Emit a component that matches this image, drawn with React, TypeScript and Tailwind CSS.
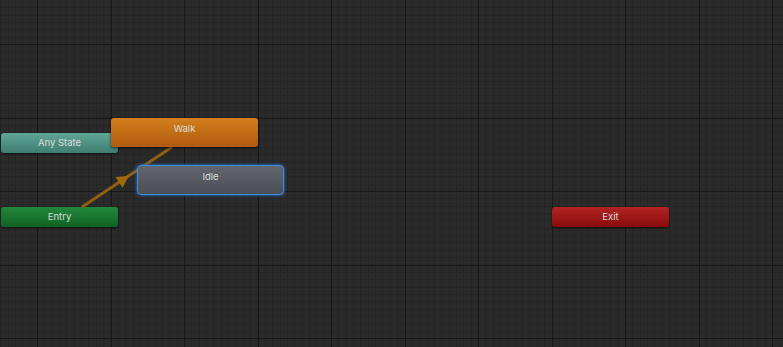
import React from "react";

const W = 783;
const H = 347;
const STEP = 73.5;
const MINOR = STEP / 10;
const OX = 37;
const OY = 44;

function Grid() {
  const minorV: number[] = [];
  const minorH: number[] = [];
  const majorV: number[] = [];
  const majorH: number[] = [];
  for (let x = OX - STEP * 2; x < W; x += MINOR) if (x >= 0) minorV.push(Math.round(x));
  for (let y = OY - STEP * 2; y < H; y += MINOR) if (y >= 0) minorH.push(Math.round(y));
  for (let x = OX; x < W; x += STEP) majorV.push(Math.round(x));
  for (let y = OY; y < H; y += STEP) majorH.push(Math.round(y));
  return (
    <svg className="absolute inset-0" width={W} height={H} shapeRendering="crispEdges">
      <rect width={W} height={H} fill="#2a2a2a" />
      {minorV.map((x, i) => (
        <rect key={"mv" + i} x={x} y={0} width={1} height={H} fill="#252525" />
      ))}
      {minorH.map((y, i) => (
        <rect key={"mh" + i} x={0} y={y} width={W} height={1} fill="#252525" />
      ))}
      {majorV.map((x, i) => (
        <rect key={"Mv" + i} x={x} y={0} width={1} height={H} fill="#181818" />
      ))}
      {majorH.map((y, i) => (
        <rect key={"Mh" + i} x={0} y={y} width={W} height={1} fill="#181818" />
      ))}
    </svg>
  );
}

function Transition() {
  const x1 = 82, y1 = 207, x2 = 172, y2 = 147;
  const ang = (Math.atan2(y2 - y1, x2 - x1) * 180) / Math.PI;
  return (
    <svg className="absolute inset-0" width={W} height={H}>
      <line x1={x1} y1={y1} x2={x2} y2={y2} stroke="#8f600e" strokeWidth={3} />
      <g transform={`translate(124 179) rotate(${ang})`}>
        <polygon points="6,0 -6,-6.5 -6,6.5" fill="#9c690c" />
      </g>
    </svg>
  );
}

const label = "font-['Inter','Liberation_Sans',sans-serif] text-[9.5px] text-[#dcdcdc] leading-none";

export default function App() {
  return (
    <div className="relative w-[783px] h-[347px] overflow-hidden bg-[#2a2a2a]">
      <Grid />
      {/* Any State */}
      <div className={`absolute left-[1px] top-[133px] w-[117px] h-[20px] rounded-[3px] bg-linear-to-b from-[#5fa696] to-[#3f7d70] shadow-[0_1px_2px_rgba(0,0,0,0.6)] flex items-center justify-center ${label}`}>
        Any State
      </div>
      {/* Entry */}
      <div className={`absolute left-[1px] top-[207px] w-[117px] h-[20px] rounded-[3px] bg-linear-to-b from-[#22873b] to-[#0f6324] shadow-[0_1px_2px_rgba(0,0,0,0.6)] flex items-center justify-center ${label}`}>
        Entry
      </div>
      <Transition />
      {/* Walk */}
      <div className={`absolute left-[111px] top-[118px] w-[147px] h-[29px] rounded-[3px] bg-linear-to-b from-[#d2801f] to-[#b05a0c] shadow-[0_1px_3px_rgba(0,0,0,0.7)] flex justify-center pt-[6px] ${label}`}>
        Walk
      </div>
      {/* Idle */}
      <div className={`absolute left-[137px] top-[165px] w-[147px] h-[30px] rounded-[4px] border border-[#3d8fe0] bg-linear-to-b from-[#62656c] to-[#4b4e55] shadow-[0_0_3px_1px_rgba(40,120,220,0.6)] flex justify-center pt-[6px] ${label}`}>
        Idle
      </div>
      {/* Exit */}
      <div className={`absolute left-[552px] top-[207px] w-[117px] h-[20px] rounded-[3px] bg-linear-to-b from-[#b12424] to-[#8a0808] shadow-[0_1px_2px_rgba(0,0,0,0.6)] flex items-center justify-center ${label}`}>
        Exit
      </div>
    </div>
  );
}
